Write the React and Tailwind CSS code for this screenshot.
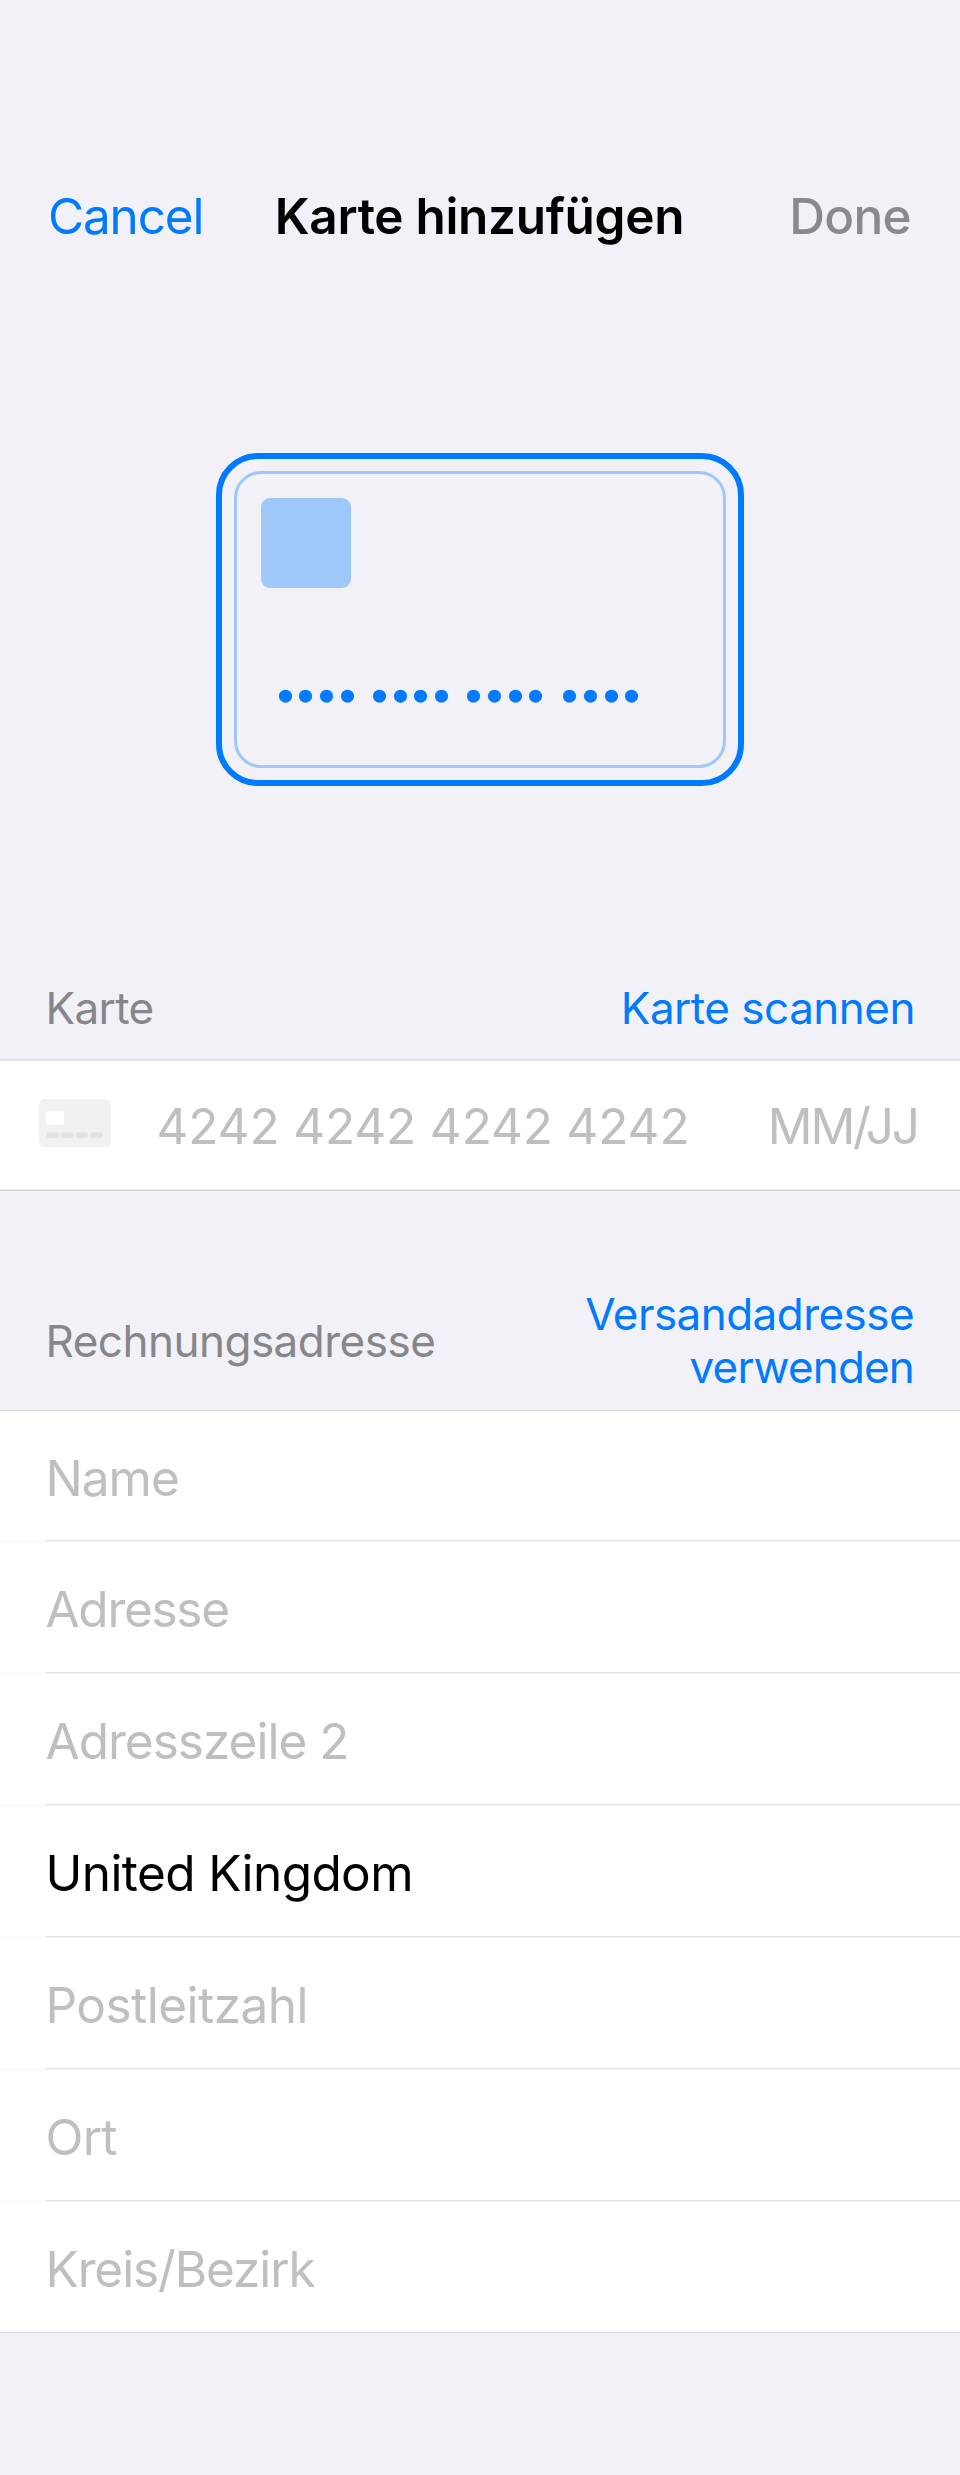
import React from "react";

const dots = [285.5, 305.5, 326.5, 347.5, 379.5, 400.5, 420.5, 441.5, 473.5, 494.5, 515.5, 535.5, 569.5, 590.5, 611.5, 631.5];

const fields = [
  { text: "Name", style: "tracking-[-1.02px]" },
  { text: "Adresse", style: "tracking-[-1.28px]" },
  { text: "Adresszeile 2", style: "tracking-[-0.99px]" },
  { text: "United Kingdom", style: "tracking-[-0.6px]", filled: true },
  { text: "Postleitzahl", style: "tracking-[-0.53px]" },
  { text: "Ort", style: "tracking-[-0.7px]" },
  { text: "Kreis/Bezirk", style: "tracking-[-1.1px]" },
];

function CardIllustration() {
  return (
    <svg className="block" width="528" height="333" viewBox="216 453 528 333" fill="none">
      <rect x="219" y="456" width="522" height="327" rx="39" stroke="#007aff" strokeWidth="6" />
      <rect x="235.5" y="472.5" width="489" height="294" rx="25.5" stroke="#9fc8fa" strokeWidth="3" />
      <rect x="261" y="498" width="90" height="90" rx="9" fill="#9fc8fa" />
      {dots.map((cx) => (
        <circle key={cx} cx={cx} cy="696.2" r="6.5" fill="#007aff" />
      ))}
    </svg>
  );
}

function CardIcon() {
  return (
    <svg className="block shrink-0" width="72" height="48" viewBox="0 0 72 48">
      <rect width="72" height="48" rx="6" fill="#f1f1f1" />
      <rect x="7" y="12.4" width="18" height="13.4" rx="2" fill="#fff" />
      {[7.3, 22, 36.7, 51.3].map((x) => (
        <rect key={x} x={x} y="33.3" width="12.2" height="5.6" rx="2.4" fill="#e3e3e3" />
      ))}
    </svg>
  );
}

function Field({ text, style, filled, first, last }) {
  return (
    <>
      <div className={`flex items-center bg-white pl-[45.5px] pt-[4px] ${first ? "h-[129px]" : "h-[130px]"}`}>
        <span className={`${style} ${filled ? "text-black" : "text-[#bfbfbf]"}`}>{text}</span>
      </div>
      {!last && (
        <div className="bg-white">
          <div className="ml-[45px] h-px bg-[#e4e4ea]" />
          <div className="flex h-px bg-[#f6f6f8]">
            <div className="ml-[45px] flex-1 bg-[#f2f2f6]" />
          </div>
        </div>
      )}
    </>
  );
}

export default function App() {
  return (
    <div className="flex h-[2475px] w-[960px] flex-col overflow-hidden bg-[#f2f1f7] font-['Inter',sans-serif] text-[49.5px] leading-[60px] whitespace-nowrap">
      <header className="mt-[132px] grid h-[168px] shrink-0 grid-cols-[220px_1fr_220px] items-center pr-[49px] pl-[48px]">
        <button className="text-left tracking-[-1.17px] text-[#007aff]">Cancel</button>
        <h1 className="text-center font-semibold tracking-[-0.32px]">Karte hinzufügen</h1>
        <button className="text-right font-medium tracking-[-0.7px] text-[#8a8a8e]">Done</button>
      </header>

      <div className="mt-[153px] flex justify-center">
        <CardIllustration />
      </div>

      <section className="mt-[171px]">
        <div className="flex h-[102px] items-center justify-between pr-[45px] pl-[45.5px] text-[44px] leading-[53px]">
          <h2 className="tracking-[-0.62px] text-[#86868b]">Karte</h2>
          <button className="tracking-[-0.5px] text-[#007aff]">Karte scannen</button>
        </div>
        <div className="h-px bg-[#d8d7dc]" />
        <div className="h-px bg-[#ebebee]" />
        <div className="flex h-[128px] items-center bg-white pr-[42px] pl-[39px] text-[#bfbfbf]">
          <div className="pb-[4px]">
            <CardIcon />
          </div>
          <span className="ml-[45.5px] flex-1 pt-[2px] tracking-[-0.16px]">4242 4242 4242 4242</span>
          <span className="pt-[2px] tracking-[-2.11px]">MM/JJ</span>
        </div>
        <div className="h-px bg-[#ebebee]" />
        <div className="h-px bg-[#d8d7dc]" />
      </section>

      <section className="mt-[81px]">
        <div className="flex h-[138px] items-center justify-between pr-[46px] pl-[45.5px] text-[44px] leading-[53px]">
          <h2 className="tracking-[-0.51px] text-[#86868b]">Rechnungsadresse</h2>
          <button className="text-right text-[#007aff]">
            <span className="block tracking-[-0.55px]">Versandadresse</span>
            <span className="block tracking-[-0.83px]">verwenden</span>
          </button>
        </div>
        <div className="h-px bg-[#d8d7dc]" />
        {fields.map((f, i) => (
          <Field key={f.text} {...f} first={i === 0} last={i === fields.length - 1} />
        ))}
        <div className="h-px bg-[#d8d7dc]" />
      </section>
    </div>
  );
}
